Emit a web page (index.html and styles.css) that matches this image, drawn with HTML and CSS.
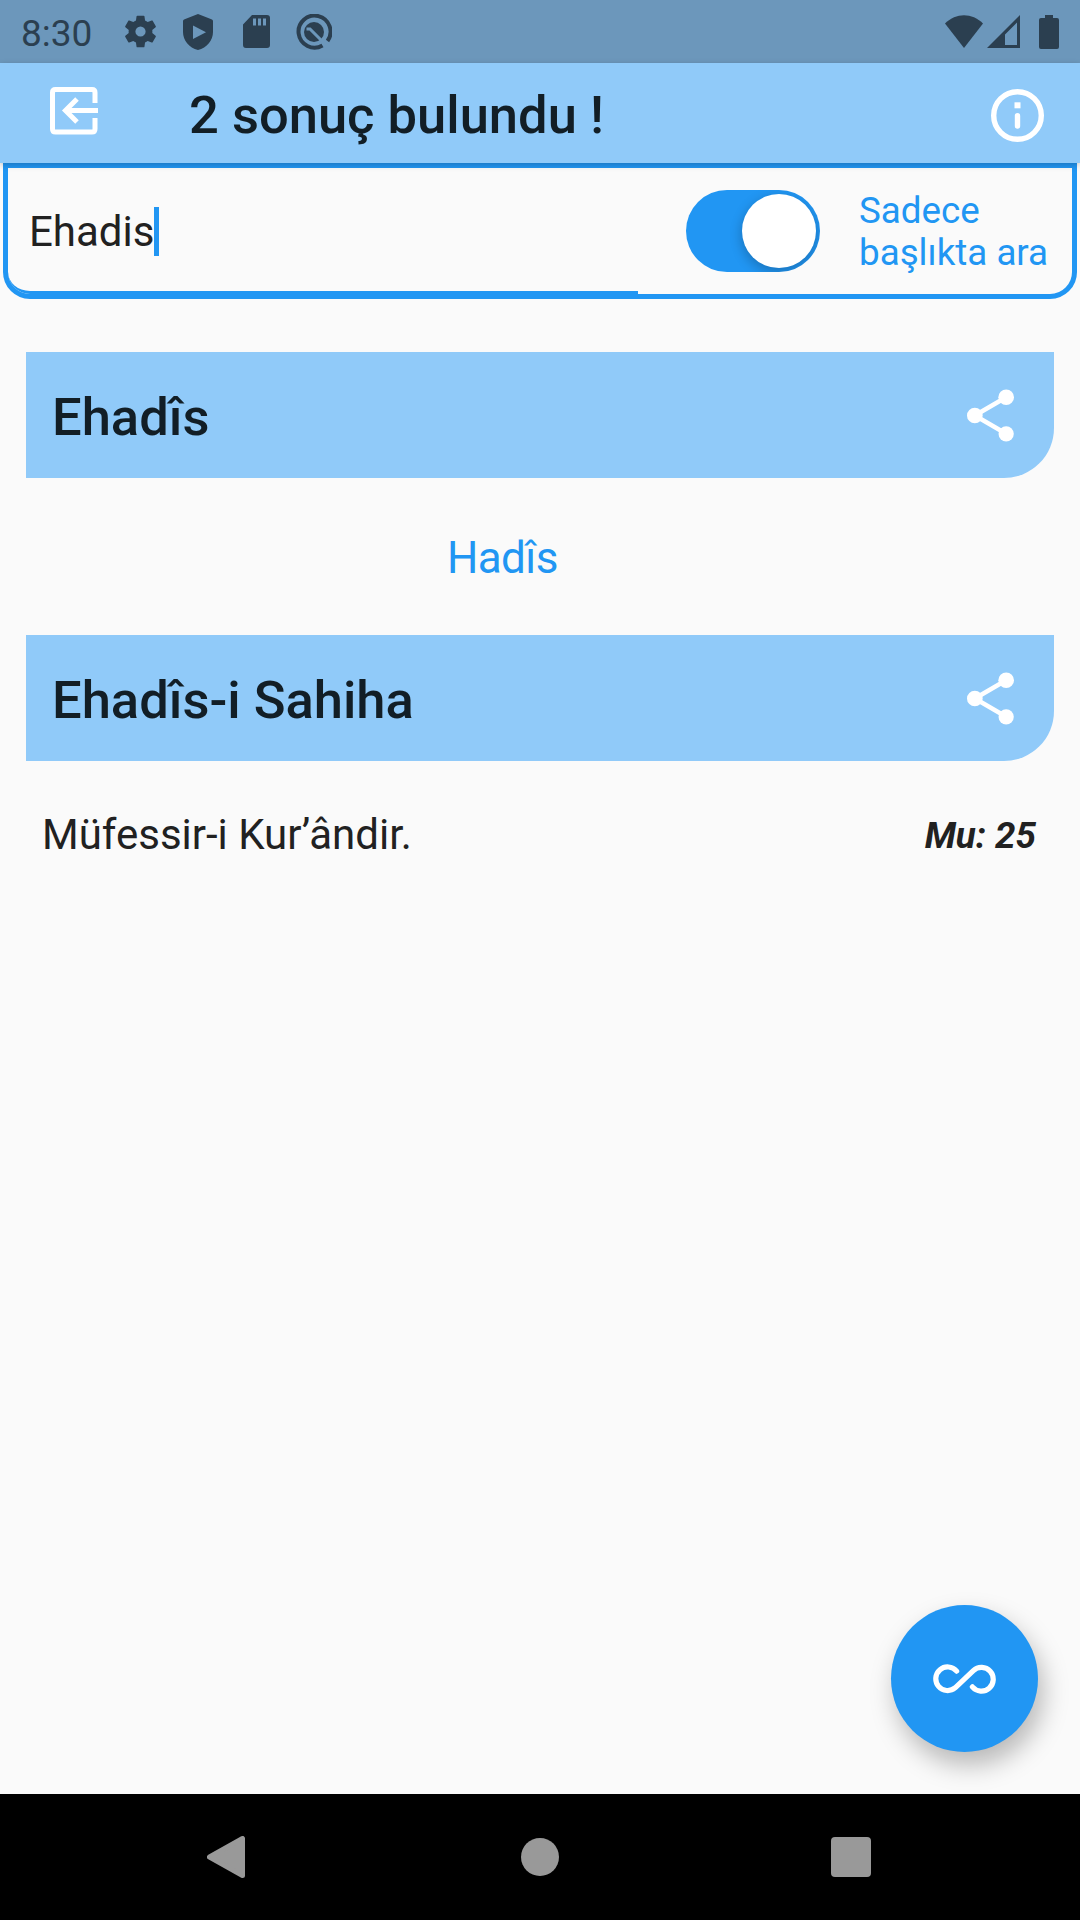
FILE: index.html
```
<!DOCTYPE html>
<html lang="tr">
<head>
    <meta charset="UTF-8">
    <meta name="viewport" content="width=device-width, initial-scale=1.0">
    <title>2 sonuç bulundu !</title>
    <link rel="stylesheet" href="styles.css">
</head>
<body>
    <div class="status-bar">
        <span class="clock">8:30</span>
        <div class="status-left">
            <svg class="icon-gear" viewBox="2 2 20 20"><path d="M19.14 12.94c.04-.3.06-.61.06-.94 0-.32-.02-.64-.07-.94l2.03-1.58c.18-.14.23-.41.12-.61l-1.92-3.32c-.12-.22-.37-.29-.59-.22l-2.39.96c-.5-.38-1.03-.7-1.62-.94l-.36-2.54c-.04-.24-.24-.41-.48-.41h-3.84c-.24 0-.43.17-.47.41l-.36 2.54c-.59.24-1.13.57-1.62.94l-2.39-.96c-.22-.08-.47 0-.59.22L2.74 8.87c-.12.21-.08.47.12.61l2.03 1.58c-.05.3-.09.63-.09.94s.02.64.07.94l-2.03 1.58c-.18.14-.23.41-.12.61l1.92 3.32c.12.22.37.29.59.22l2.39-.96c.5.38 1.03.7 1.62.94l.36 2.54c.05.24.24.41.48.41h3.84c.24 0 .44-.17.47-.41l.36-2.54c.59-.24 1.13-.56 1.62-.94l2.39.96c.22.08.47 0 .59-.22l1.92-3.32c.12-.22.07-.47-.12-.61l-2.01-1.58zM12 15.1a3.1 3.1 0 1 1 0-6.2 3.1 3.1 0 0 1 0 6.2z"/></svg>
            <svg class="icon-shield" viewBox="0 0 30 36"><path fill-rule="evenodd" d="M15 0L29 5.5Q30 6 30 7V18C30 26 24 34 15 36C6 34 0 26 0 18V7Q0 6 1 5.5ZM10 11.5V25L23 18.2Z"/></svg>
            <svg class="icon-sd" viewBox="0 0 27 33"><path fill-rule="evenodd" d="M9 0H24Q27 0 27 3V30Q27 33 24 33H3Q0 33 0 30V9.5ZM10 3.5V10.5H13V3.5ZM15 3.5V10.5H18V3.5ZM20 3.5V10.5H23V3.5Z"/></svg>
            <svg class="icon-radar" viewBox="0 0 36 36">
                <path class="ring" d="M26.5 31.5A16 16 0 1 1 31.5 27"/>
                <circle cx="18" cy="18" r="10"/>
                <path class="slash" d="M10.500 15L14 15L27.500 28.500"/>
            </svg>
        </div>
        <div class="status-right">
            <svg class="icon-wifi" viewBox="0 0 38 33"><path d="M0 8.5C11-2.5 27-2.5 38 8.5L19 33Z"/></svg>
            <svg class="icon-signal" viewBox="0 0 33 33"><path fill-rule="evenodd" d="M33 0V33H0ZM30 7.5L18 19.5V30H30Z"/></svg>
            <svg class="icon-battery" viewBox="0 0 20 34"><path d="M6 0H14V3H18Q20 3 20 5V32Q20 34 18 34H2Q0 34 0 32V5Q0 3 2 3H6Z"/></svg>
        </div>
    </div>

    <header class="app-bar">
        <svg class="icon-exit" viewBox="0 0 48 48">
            <path d="M45 16V5.5Q45 2.5 42 2.5H5.5Q2.5 2.5 2.5 5.5V42Q2.5 45 5.5 45H42Q45 45 45 42V31"/>
            <path d="M48 23.5H16M27 12L15.5 23.5L27 35"/>
        </svg>
        <h1>2 sonuç bulundu !</h1>
        <svg class="icon-info" viewBox="0 0 53 53">
            <circle cx="26.5" cy="26.5" r="23.8"/>
            <path d="M26.5 26.8V37"/>
            <rect x="23.5" y="13.3" width="6" height="6"/>
        </svg>
    </header>

    <section class="search">
        <div class="field">
            <span>Ehadis</span><i class="caret"></i>
        </div>
        <div class="switch"><div class="knob"></div></div>
        <p class="switch-label">Sadece<br>başlıkta ara</p>
    </section>

    <main>
        <article>
            <div class="entry-title">
                <h2>Ehadîs</h2>
                <svg class="icon-share" viewBox="3 2 18 20"><path d="M6 12L18 5M6 12L18 19"/><circle cx="18" cy="5" r="3"/><circle cx="6" cy="12" r="3"/><circle cx="18" cy="19" r="2.92"/></svg>
            </div>
            <div class="entry-link"><a>Hadîs</a></div>
        </article>
        <article>
            <div class="entry-title">
                <h2>Ehadîs-i Sahiha</h2>
                <svg class="icon-share" viewBox="3 2 18 20"><path d="M6 12L18 5M6 12L18 19"/><circle cx="18" cy="5" r="3"/><circle cx="6" cy="12" r="3"/><circle cx="18" cy="19" r="2.92"/></svg>
            </div>
            <div class="entry-text">
                <p>Müfessir-i Kur’ândir.</p>
                <em>Mu: 25</em>
            </div>
        </article>
        <div class="fab">
            <svg class="icon-infinity" viewBox="0 0 64 30"><path d="M24 7A12 12 0 1 0 22.5 24L41 6.5A12 12 0 1 1 40 23"/></svg>
        </div>
    </main>

    <nav class="nav-bar">
        <svg class="nav-back" viewBox="0 0 38 42"><path d="M35.5 2.5V39.5L2.5 21Z"/></svg>
        <div class="nav-home"></div>
        <div class="nav-recent"></div>
    </nav>
</body>
</html>
```
FILE: styles.css
```
* {
    box-sizing: border-box;
    margin: 0;
    padding: 0;
}

body {
    width: 1080px;
    height: 1920px;
    display: flex;
    flex-direction: column;
    overflow: hidden;
    font-family: Roboto, sans-serif;
    background-color: #fafafa;
    color: #212121;
}

svg {
    display: block;
    flex: none;
}

/* Status bar */
.status-bar {
    height: 63px;
    display: flex;
    align-items: center;
    padding: 0 21px;
    background-color: #6c97bb;
    color: #2b3f50;
    fill: #2b3f50;
}

.clock {
    width: 103px;
    font-size: 37px;
    line-height: 63px;
    padding-top: 3px;
}

.status-left {
    display: flex;
    align-items: center;
    flex: 1;
}

.status-right {
    display: flex;
    align-items: center;
}

.icon-gear {
    width: 33px;
    height: 33px;
    margin-right: 26px;
}

.icon-shield {
    width: 30px;
    height: 36px;
    margin-right: 30px;
}

.icon-sd {
    width: 27px;
    height: 33px;
    margin-right: 26px;
}

.icon-radar {
    width: 36px;
    height: 36px;
}

.icon-radar .ring {
    fill: none;
    stroke: #2b3f50;
    stroke-width: 4;
}

.icon-radar .slash {
    fill: none;
    stroke: #6c97bb;
    stroke-width: 3;
}

.icon-wifi {
    width: 38px;
    height: 33px;
    margin-right: 4px;
}

.icon-signal {
    width: 33px;
    height: 33px;
    margin-right: 19px;
}

.icon-battery {
    width: 20px;
    height: 34px;
}

/* App bar */
.app-bar {
    position: relative;
    height: 100px;
    display: flex;
    align-items: center;
    padding: 0 36px 0 50px;
    background-color: #90caf9;
    box-shadow: 0 2px 6px rgba(0, 0, 0, 0.22);
}

.icon-exit {
    width: 48px;
    height: 48px;
    margin: 0 91px 5px 0;
    fill: none;
    stroke: #fff;
    stroke-width: 5;
}

h1, h2 {
    font-size: 52.5px;
    font-weight: 500;
    line-height: 62px;
    color: #121e26;
}

h1 {
    flex: 1;
    padding-top: 4px;
}

.icon-info {
    width: 53px;
    height: 53px;
    margin-top: 5px;
    fill: none;
    stroke: #fff;
    stroke-width: 5.4;
}

.icon-info path {
    stroke-linecap: round;
}

.icon-info rect {
    fill: #fff;
    stroke: none;
}

/* Search */
.search {
    height: 136px;
    margin: 0 3px;
    display: flex;
    align-items: center;
    border: 5px solid #2196f3;
    border-radius: 0 0 27px 27px;
}

.field {
    width: 630px;
    height: 126px;
    display: flex;
    align-items: center;
    padding: 4px 0 0 21px;
    margin-right: 48px;
    border-bottom: 3px solid #2196f3;
    border-bottom-left-radius: 22px;
    font-size: 42px;
}

.caret {
    width: 5px;
    height: 49px;
    background-color: #2196f3;
}

.switch {
    width: 134px;
    height: 82px;
    display: flex;
    align-items: center;
    justify-content: flex-end;
    padding-right: 4px;
    margin-right: 39px;
    border-radius: 41px;
    background-color: #2196f3;
    overflow: hidden;
}

.knob {
    width: 74px;
    height: 74px;
    border-radius: 50%;
    background-color: #fff;
    box-shadow: 0 4px 12px 1px rgba(0, 0, 0, 0.22);
}

.switch-label {
    padding-top: 2px;
    font-size: 36.75px;
    line-height: 42px;
    color: #2196f3;
}

/* Results */
main {
    position: relative;
    flex: 1;
    padding: 53px 26px 0;
}

.entry-title {
    height: 126px;
    display: flex;
    align-items: center;
    justify-content: space-between;
    padding: 0 40px 0 26px;
    background-color: #90caf9;
    border-bottom-right-radius: 50px;
}

h2 {
    padding-top: 4px;
}

.icon-share {
    width: 47px;
    height: 53px;
    fill: #fff;
}

.icon-share path {
    stroke: #fff;
    stroke-width: 1.7;
}

.entry-link {
    height: 157px;
    display: flex;
    align-items: center;
    padding: 2px 0 0 421px;
    font-size: 44px;
    letter-spacing: -0.6px;
    color: #2196f3;
}

.entry-text {
    height: 148px;
    display: flex;
    align-items: center;
    justify-content: space-between;
    padding: 0 18px 0 16px;
    font-size: 42px;
}

.entry-text p {
    padding-bottom: 2px;
}

.entry-text em {
    font-size: 36.75px;
    font-weight: 700;
}

/* Floating button over the list */
.fab {
    position: absolute;
    right: 42px;
    bottom: 42px;
    width: 147px;
    height: 147px;
    display: flex;
    align-items: center;
    justify-content: center;
    border-radius: 50%;
    background-color: #2196f3;
    box-shadow: 5px 13px 26px rgba(0, 0, 0, 0.27);
}

.icon-infinity {
    width: 63px;
    height: 30px;
    fill: none;
    stroke: #fff;
    stroke-width: 5.3;
    stroke-linecap: round;
}

/* Navigation bar */
.nav-bar {
    height: 126px;
    display: flex;
    align-items: center;
    padding: 0 209px 0 207px;
    background-color: #000;
}

.nav-back {
    width: 38px;
    height: 42px;
    fill: #999;
    stroke: #999;
    stroke-width: 5;
    stroke-linejoin: round;
}

.nav-home {
    width: 38px;
    height: 38px;
    margin: 0 auto 0 276px;
    border-radius: 50%;
    background-color: #999;
}

.nav-recent {
    width: 40px;
    height: 40px;
    border-radius: 4px;
    background-color: #999;
}
```
